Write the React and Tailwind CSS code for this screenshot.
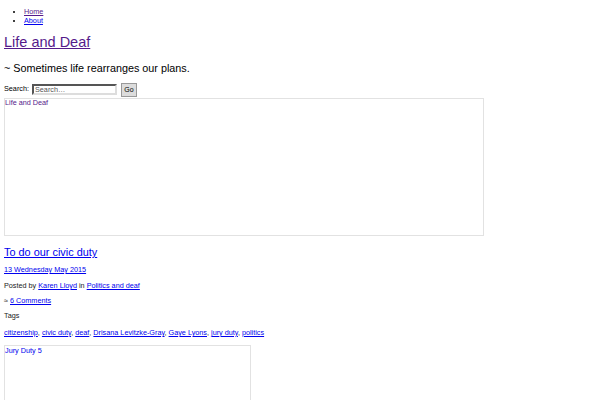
export default function App() {
  const f = { fontFamily: '"Liberation Sans", Arial, sans-serif' };
  return (
    <div className="bg-white w-[600px] h-[400px] overflow-hidden pl-[4px] text-[7.25px] text-black" style={f}>
      <ul className="list-disc pl-[20px] pt-[7px] leading-[9px]">
        <li><a href="#" className="underline text-[#551a8b]">Home</a></li>
        <li><a href="#" className="underline text-[#0000ee]">About</a></li>
      </ul>
      <h1 className="text-[14.5px] leading-[17px] mt-[9px]">
        <a href="#" className="underline text-[#551a8b]">Life and Deaf</a>
      </h1>
      <h2 className="text-[10.8px] leading-[13px] mt-[11px]">~ Sometimes life rearranges our plans.</h2>
      <div className="flex items-center mt-[7px] h-[15px]">
        <span>Search:</span>
        <input
          className="ml-[3px] w-[85px] h-[11px] border-2 border-t-[#555] border-l-[#555] border-b-[#ddd] border-r-[#ddd] bg-white text-[7.25px] px-[1px] leading-[7px] placeholder:text-[#555]"
          placeholder="Search…"
          style={f}
        />
        <button className="ml-[4px] w-[16px] h-[14px] bg-[#dcdcdc] border border-[#999] text-[7px] leading-[7px]" style={f}>Go</button>
      </div>
      <div className="w-[480px] h-[138px] border border-[#e2e2e2] mt-[1px]">
        <a href="#" className="text-[#551a8b] leading-[8px] block">Life and Deaf</a>
      </div>
      <h2 className="text-[10.9px] leading-[13px] mt-[10px]">
        <a href="#" className="underline text-[#0000ee]">To do our civic duty</a>
      </h2>
      <p className="mt-[6px] leading-[9px]"><a href="#" className="underline text-[#0000ee]">13 Wednesday May 2015</a></p>
      <p className="mt-[7px] leading-[9px] text-[#222]">Posted by <a href="#" className="underline text-[#0000ee]">Karen Lloyd</a> in <a href="#" className="underline text-[#0000ee]">Politics and deaf</a></p>
      <p className="mt-[6px] leading-[9px] text-[#222]">≈ <a href="#" className="underline text-[#0000ee]">6 Comments</a></p>
      <p className="mt-[6px] leading-[9px] text-[#222]">Tags</p>
      <p className="mt-[8px] leading-[9px] text-[#222]">
        <a href="#" className="underline text-[#0000ee]">citizenship</a>, <a href="#" className="underline text-[#0000ee]">civic duty</a>, <a href="#" className="underline text-[#0000ee]">deaf</a>, <a href="#" className="underline text-[#0000ee]">Drisana Levitzke-Gray</a>, <a href="#" className="underline text-[#0000ee]">Gaye Lyons</a>, <a href="#" className="underline text-[#0000ee]">jury duty</a>, <a href="#" className="underline text-[#0000ee]">politics</a>
      </p>
      <div className="w-[247px] h-[80px] border border-[#e2e2e2] mt-[8px]">
        <a href="#" className="text-[#0000ee] leading-[9px] block">Jury Duty 5</a>
      </div>
    </div>
  );
}
